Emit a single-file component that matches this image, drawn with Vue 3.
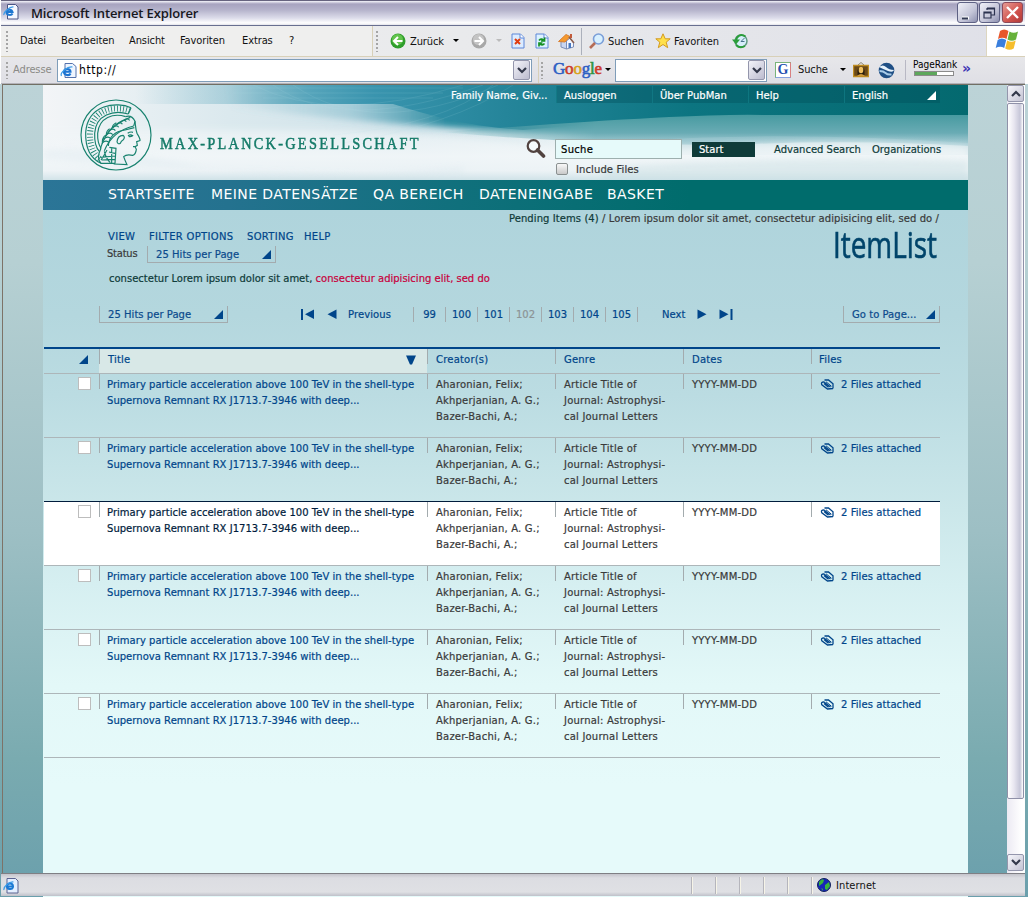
<script setup>
const menus = ['Datei', 'Bearbeiten', 'Ansicht', 'Favoriten', 'Extras', '?']
const nav = ['STARTSEITE', 'MEINE DATENSÄTZE', 'QA BEREICH', 'DATENEINGABE', 'BASKET']
const pages = [99, 100, 101, 102, 103, 104, 105]
const rows = [0, 1, 2, 3, 4, 5]
const current = 102
const selected = 2
</script>

<template>
  <div class="stage">
    <div class="titlebar">
      <svg class="ico" width="16" height="17" viewBox="0 0 16 17">
        <path d="M4.500 1.500h8l2.500 2.500v12h-10.500z" fill="#f6f8ff" stroke="#4c5584" />
        <path d="M9.500 10.500c-1 2-5.500 2-6-1c-.5-3 5-4 6-.5h-5.500" fill="none" stroke="#1f77d0" stroke-width="2" />
        <path d="M1 12c-1-3 6-8.500 9.500-8" fill="none" stroke="#3c9be8" stroke-width="1.200" />
      </svg>
      <span class="wtitle">Microsoft Internet Explorer</span>
      <span class="wbtn"><svg width="19" height="20"><path d="M4 15h7" stroke="#fff" stroke-width="3" /><path d="M4 15.500h6" stroke="#333a55" stroke-width="2" /></svg></span>
      <span class="wbtn"><svg width="18" height="20"><path d="M7 5h7.500v7h-3M7 5v2M7 6h7M4 9h7v6h-7zM4 10h7" fill="none" stroke="#2c3350" stroke-width="1.200" /></svg></span>
      <span class="wbtn close"><svg width="19" height="20"><path d="M4 4l11 11M15 4l-11 11" stroke="#fff" stroke-width="2.400" /></svg></span>
    </div>

    <div class="menubar">
      <div class="menus">
        <i class="grip"></i>
        <span v-for="m in menus" :key="m">{{ m }}</span>
      </div>
      <div class="tools">
        <i class="grip"></i>
        <svg width="16" height="16" viewBox="0 0 16 16"><circle cx="8" cy="8" r="7.500" fill="#2f9e2c" /><circle cx="7.500" cy="6.500" r="5.500" fill="#62c44d" /><path d="M12.500 8h-8M8 4l-4 4l4 4" fill="none" stroke="#fff" stroke-width="2" /></svg>
        <span>Zurück</span>
        <svg width="6" height="4"><path d="M0 0h6l-3 3z" fill="#000" /></svg>
        <svg width="16" height="16" viewBox="0 0 16 16"><circle cx="8" cy="8" r="7.500" fill="#a8a8a8" /><circle cx="7.500" cy="6.500" r="5.500" fill="#c4c4c4" /><path d="M3.500 8h8M8 4l4 4l-4 4" fill="none" stroke="#fff" stroke-width="2" /></svg>
        <svg width="6" height="4"><path d="M0 0h6l-3 3z" fill="#bbb" /></svg>
        <svg width="14" height="16"><path d="M1 1h8.500l3.500 3.500v10.500h-12z" fill="#dcecff" stroke="#5c86d8" /><path d="M9 1v4h4" fill="#fff" stroke="#5c86d8" /><path d="M4 6l5 5M9 6l-5 5" stroke="#e03c10" stroke-width="2" /></svg>
        <svg width="14" height="16"><path d="M1 1h8.500l3.500 3.500v10.500h-12z" fill="#dcf2ff" stroke="#5c86d8" /><path d="M9 1v4h4" fill="#fff" stroke="#5c86d8" /><path d="M4 7.500q2-2.500 4.500-.5M9.500 4.500V8H6M9.500 10.500q-2 2.500-4.500 .5M4 13.500V10H7.500" fill="none" stroke="#159124" stroke-width="1.700" /></svg>
        <svg width="17" height="17"><path d="M3 8.500v5.500l5.500 2v-8z" fill="#c8d6f2" stroke="#7d8fb8" /><path d="M8.500 16V8l3.500-3l3.500 5v4z" fill="#f4f7ff" stroke="#7d8fb8" /><path d="M0.500 8.500L8 1.500l4 2l-5 5.500z" fill="#f59a2e" stroke="#d98033" /><path d="M11 4l5 6" stroke="#8b5d4c" stroke-width="1.500" /><path d="M10.500 10h2.500v5h-2.500z" fill="#4877bf" /><path d="M12 1h2v4h-2z" fill="#c25a3a" /></svg>
        <i class="vsep"></i>
        <svg width="16" height="16"><circle cx="9.500" cy="6" r="5" fill="#d8f0ff" stroke="#7a9ed8" stroke-width="1.600" /><path d="M6 10l-5 5" stroke="#b56c57" stroke-width="2.600" /></svg>
        <span>Suchen</span>
        <svg width="16" height="16" viewBox="0 0 16 16"><path d="M8 .8l2.200 5h5l-4 3.400l1.500 5.500l-4.700-3.200l-4.700 3.200l1.500-5.500l-4-3.400h5z" fill="#ffe04a" stroke="#d39a20" /></svg>
        <span>Favoriten</span>
        <svg width="16" height="16"><circle cx="9" cy="8" r="6" fill="#d6eefa" stroke="#5f9a80" stroke-width="1.500" /><path d="M9 8.500l3.500-3.500M9 8.500h3.500" stroke="#48738b" /><path d="M13.500 3.500C9 .5 4.500 2.500 4 8M4 12q4 4 9 1" fill="none" stroke="#2b9d3a" stroke-width="2" /><path d="M0 6.500h8l-4 5z" fill="#2b9d3a" /></svg>
      </div>
      <div class="flag">
        <svg width="24" height="22" viewBox="0 0 24 22"><path d="M5 2q4-3 8.500 0l-2 8q-4-2.500-8.500 0z" fill="#e8562a" /><path d="M14.500 2.500q4 2.500 8.500 0l-2 8q-4 2.500-8.500 0z" fill="#67b13a" /><path d="M2.700 11q4-3 8.500 0l-2 8q-4-2.500-8.500 0z" fill="#3b7fdd" /><path d="M12.200 11.500q4 2.500 8.500 0l-2 8q-4 2.500-8.500 0z" fill="#f6bd2c" /></svg>
      </div>
    </div>

    <div class="addrbar">
      <i class="grip"></i>
      <span class="muted">Adresse</span>
      <div class="field">
        <svg width="17" height="17" viewBox="0 0 17 17"><path d="M5 1.500h7.500l3.500 3v11h-11z" fill="#eef5ff" stroke="#5572ac" /><path d="M10.500 11.500c-1 2.500-6.500 2-6.500-1.500c0-4 6.500-4 6.500-.2h-6" fill="none" stroke="#1c74d2" stroke-width="2.100" /><path d="M1.500 14c-2-3 6-10 11-9" fill="none" stroke="#3c9be8" stroke-width="1.200" /></svg>
        <span class="url">http://</span>
        <span class="drop"><svg width="10" height="7"><path d="M1 1l4 4l4-4" fill="none" stroke="#33384a" stroke-width="2.200" /></svg></span>
      </div>
      <i class="hsep"></i>
      <i class="grip"></i>
      <span class="google"><b class="b">G</b><b class="r">o</b><b class="y">o</b><b class="b">g</b><b class="g">l</b><b class="r">e</b></span>
      <svg width="6" height="4"><path d="M0 0h6l-3 3z" fill="#000" /></svg>
      <div class="field">
        <span class="drop"><svg width="10" height="7"><path d="M1 1l4 4l4-4" fill="none" stroke="#33384a" stroke-width="2.200" /></svg></span>
      </div>
      <span class="gbox">G</span>
      <span class="gs">Suche</span>
      <svg width="6" height="4"><path d="M0 0h6l-3 3z" fill="#000" /></svg>
      <svg width="16" height="16"><path d="M5 3l3-2.500l3 2.500" fill="none" stroke="#8c8570" /><path d="M.5 3.500h15v11h-15z" fill="#6b4a18" stroke="#c08d22" stroke-width="1.400" /><path d="M4.500 13V8q3.500-7 7 0v5z" fill="#2c1e0c" /><ellipse cx="8" cy="8" rx="2.300" ry="3.200" fill="#f0c060" /><path d="M4 14q4-4 8 0z" fill="#d09a3a" /></svg>
      <svg width="17" height="17"><circle cx="8.500" cy="8.500" r="7.800" fill="#1f4f85" /><path d="M1 5q4-3 7 0t8 3q-1 3-6 1T1 5z" fill="#e6f2fb" /><path d="M1.500 9q4 0 6 2t6 1.500" fill="none" stroke="#a8cbe8" stroke-width="2" /></svg>
      <i class="hsep tall"></i>
      <div class="rank"><span>PageRank</span><i></i></div>
      <span class="more">»</span>
    </div>

    <div class="viewport">
      <main class="page">
        <header class="head">
          <svg class="sky" width="925" height="95" viewBox="0 0 925 95">
            <defs>
              <linearGradient id="base" x1="0" y1="0" x2="1" y2="0"><stop offset="0" stop-color="#f3f5f7" /><stop offset=".2" stop-color="#dbe9ee" /><stop offset=".4" stop-color="#cfe2e9" /><stop offset=".55" stop-color="#e3eef1" /><stop offset="1" stop-color="#e2eff0" /></linearGradient>
              <linearGradient id="low" x1="0" y1="0" x2="0" y2="1"><stop offset="0" stop-color="#f3f7f9" stop-opacity="0" /><stop offset=".5" stop-color="#f3f7f9" stop-opacity=".9" /><stop offset=".8" stop-color="#edf3f6" stop-opacity=".9" /><stop offset="1" stop-color="#cadfe5" /></linearGradient>
              <linearGradient id="top" gradientUnits="userSpaceOnUse" x1="0" y1="0" x2="925" y2="0"><stop offset=".1" stop-color="#4fa0b7" stop-opacity="0" /><stop offset=".2" stop-color="#4fa0b7" stop-opacity=".35" /><stop offset=".29" stop-color="#4a9eb6" stop-opacity=".9" /><stop offset=".36" stop-color="#3994ae" /><stop offset=".5" stop-color="#25859a" /><stop offset=".7" stop-color="#0c7581" /><stop offset="1" stop-color="#04696f" /></linearGradient>
              <linearGradient id="mid" gradientUnits="userSpaceOnUse" x1="180" y1="0" x2="925" y2="0"><stop offset="0" stop-color="#5aa7bd" stop-opacity="0" /><stop offset=".17" stop-color="#55a3b9" stop-opacity=".35" /><stop offset=".3" stop-color="#2c8ba0" /><stop offset="1" stop-color="#0b737e" /></linearGradient>
              <linearGradient id="wave" x1="0" y1="0" x2="0" y2="1"><stop offset="0" stop-color="#479aa0" /><stop offset="1" stop-color="#82b8c3" /></linearGradient>
              <linearGradient id="fade" x1="0" y1="0" x2="1" y2="0"><stop offset="0" stop-color="#fff" stop-opacity="0" /><stop offset=".3" stop-color="#fff" /><stop offset="1" stop-color="#fff" /></linearGradient>
              <mask id="m"><rect x="390" y="0" width="540" height="95" fill="url(#fade)" /></mask>
              <filter id="soft" x="-5%" y="-20%" width="110%" height="140%"><feGaussianBlur stdDeviation="3" /></filter>
            </defs>
            <rect width="925" height="95" fill="url(#base)" />
            <path d="M180 -8H935V35L700 40Q520 52 400 42Q300 36 190 22Z" fill="url(#mid)" filter="url(#soft)" />
            <path d="M60 0H925V34Q700 24 480 45C430 42 390 32 350 19L90 19Z" fill="url(#top)" />
            <g mask="url(#m)">
              <path d="M400 47Q650 28 720 30L925 30V61Q800 54 690 60Q540 60 400 47Z" fill="url(#wave)" />
              <path d="M600 55Q760 46 925 58V70H600Z" fill="#92c1cb" opacity=".5" />
            </g>
            <path d="M0 45H280Q400 48 480 60Q620 69 700 60Q820 52 925 62V95H0Z" fill="#f1f6f8" opacity=".65" filter="url(#soft)" />
            <rect y="48" width="925" height="47" fill="url(#low)" opacity=".8" />
            <path d="M0 65Q60 60 150 80T420 82V90Q200 90 0 74Z" fill="#d7e5ec" opacity=".3" filter="url(#soft)" />
            <path d="M560 83Q720 70 925 76V95H560Z" fill="#bfd9dd" opacity=".35" filter="url(#soft)" />
            <g fill="none" stroke="#b5e0e8" stroke-width=".6" opacity=".2">
              <path d="M210 0Q290 40 420 0" /><path d="M230 0Q300 50 440 0" /><path d="M250 0Q330 55 455 0" /><path d="M290 50Q400 40 450 0" /><path d="M300 58Q410 40 470 0" /><path d="M200 3H420M190 8H400M220 13H390" />
            </g>
          </svg>
          <div class="brand">
            <svg width="74" height="74" viewBox="236 54 222 222">
              <g fill="none" stroke="#18826f" stroke-width="3.500">
                <circle cx="347" cy="165" r="105" />
                <path d="M392 83C350 64 262 72 256 158C255 205 272 236 302 250M384 102C340 88 286 104 283 160C282 190 287 204 297 214M376 110C340 98 296 112 292 160C291 184 296 196 302 205" />
                <path d="M388 92C345 76 274 86 269 160C268 200 282 225 298 236" stroke-width="18" stroke-dasharray="2.500 6.500" />
                <path d="M392 83L384 102M302 205C292 225 292 240 302 250L345 250M376 110Q394 104 404 124Q402 132 400 138" />
                <path d="M300 206C318 150 345 128 390 112M312 212C326 178 350 150 400 138" />
                <path d="M304 190q14-12 22-2M309 178q14-12 22-2M316 166q14-12 21-2M325 154q14-12 20-2M336 144q14-12 19-2M348 135q14-12 18-2M360 127q12-10 18-2M372 121q10-8 16 0M306 186q0-14 10-20M318 164q0-12 10-18M336 144q0-10 12-16" />
                <path d="M324 198C326 170 345 154 374 150L402 143M350 186q2-20 18-20q8 6 0 14q-6 3-8 10q-6 4-10-4" />
                <path d="M404 124C406 140 406 150 410 160Q420 176 419 182L409 185L411 196L404 200L408 208Q406 224 397 226Q378 222 370 230Q374 242 380 254L340 252M382 160q8-6 16-3M383 167q8-5 14 0q-6 4-12 2M398 200l8-1" />
                <path d="M327 202L347 205L344 250M334 204v46M320 210q-12 22-18 30M312 214q4 20 18 34M300 232l44-4M304 240l40-2M326 216l18 4" />
              </g>
            </svg>
            <span>MAX-PLANCK-GESELLSCHAFT</span>
          </div>
          <div class="service">
            <div class="topmenu">
              <span class="user">Family Name, Giv...</span>
              <span class="cell">Ausloggen</span><span class="cell">Über PubMan</span><span class="cell">Help</span>
              <span class="cell lang">English<svg width="9" height="9"><path d="M9 0v9h-9z" fill="#fff" /></svg></span>
            </div>
            <div class="search">
              <svg width="21" height="21"><circle cx="8.500" cy="7" r="5.800" fill="#f5fafb" stroke="#51423f" stroke-width="2.200" /><path d="M12.500 11l6 6" stroke="#51423f" stroke-width="3.600" stroke-linecap="round" /></svg>
              <span class="query">Suche</span>
              <span class="start">Start</span>
              <span class="link">Advanced Search</span>
              <span class="link">Organizations</span>
            </div>
            <div class="include"><i></i><span>Include Files</span></div>
          </div>
        </header>
        <nav class="nav"><span v-for="n in nav" :key="n">{{ n }}</span></nav>

        <section class="info">
          <div class="left">
            <div class="views"><span>VIEW</span><span>FILTER OPTIONS</span><span>SORTING</span><span>HELP</span></div>
            <div class="status"><span class="lbl">Status</span><span class="select">25 Hits per Page<svg width="9" height="9"><path d="M9 0v9h-9z" fill="#00458a" /></svg></span></div>
            <p class="hint">consectetur Lorem ipsum dolor sit amet, <em>consectetur adipisicing elit, sed do</em></p>
          </div>
          <div class="right">
            <p class="crumb"><b>Pending Items (4)</b> / Lorem ipsum dolor sit amet, consectetur adipisicing elit, sed do /</p>
            <h1>ItemList</h1>
          </div>
        </section>

        <div class="pager">
          <span class="select">25 Hits per Page<svg width="9" height="9"><path d="M9 0v9h-9z" fill="#00458a" /></svg></span>
          <svg class="first" width="14" height="11"><path d="M1 0v11" stroke="#00458a" stroke-width="2" /><path d="M13 .5v9.500l-9-4.750z" fill="#00458a" /></svg>
          <svg class="prev" width="10" height="11"><path d="M9.500 .5v9.500l-9-4.750z" fill="#00458a" /></svg>
          <span class="step">Previous</span>
          <ol><li v-for="p in pages" :key="p" :class="{ off: p === current }">{{ p }}</li></ol>
          <span class="next">Next</span>
          <svg class="fwd" width="10" height="11"><path d="M.5 .5v9.500l9-4.750z" fill="#00458a" /></svg>
          <svg width="14" height="11"><path d="M12.500 0v11" stroke="#00458a" stroke-width="2" /><path d="M.5 .5v9.500l9-4.750z" fill="#00458a" /></svg>
          <span class="select goto">Go to Page...<svg width="9" height="9"><path d="M9 0v9h-9z" fill="#00458a" /></svg></span>
        </div>

        <div class="table">
          <div class="row thead">
            <div class="pick"><svg width="9" height="9"><path d="M9 0v9h-9z" fill="#00458a" /></svg></div>
            <div class="col sorted">Title<svg width="10" height="10"><path d="M0 .5h10l-4 9h-2z" fill="#00458a" /></svg></div>
            <div class="col">Creator(s)</div><div class="col">Genre</div><div class="col">Dates</div><div class="col last">Files</div>
          </div>
          <div v-for="r in rows" :key="r" class="row item" :class="{ active: r === selected }">
            <div class="pick"><i></i></div>
            <div class="col title">Primary particle acceleration above 100 TeV in the shell-type<br>Supernova Remnant RX J1713.7-3946 with deep...</div>
            <div class="col">Aharonian, Felix;<br>Akhperjanian, A. G.;<br>Bazer-Bachi, A.;</div>
            <div class="col">Article Title of<br>Journal: Astrophysi-<br>cal Journal Letters</div>
            <div class="col date">YYYY-MM-DD</div>
            <div class="col files">
              <svg width="15" height="11" viewBox="0 0 15 11"><path d="M13 9.500L7.500 10L1.800 5.800Q.6 2.800 3.800 2.800L10.500 8M4.500 1H8.500L13 4.800V9.500M4 4.500L8.500 8.300" fill="none" stroke="#00458a" stroke-width="1.300" /><path d="M6 2.800L11.500 7.300" stroke="#00458a" stroke-width="1" /></svg>
              <span>2 Files attached</span>
            </div>
          </div>
        </div>
      </main>
      <div class="scroll">
        <span class="sbtn"><svg width="10" height="7"><path d="M1 6l4-4l4 4" fill="none" stroke="#33384a" stroke-width="2.200" /></svg></span>
        <span class="thumb"></span>
        <span class="sbtn down"><svg width="10" height="7"><path d="M1 1l4 4l4-4" fill="none" stroke="#33384a" stroke-width="2.200" /></svg></span>
      </div>
    </div>

    <div class="statusbar">
      <svg class="ico" width="16" height="17" viewBox="0 0 16 17"><path d="M4 1.500h8.500l2.500 2.500v12h-11z" fill="#e4efff" stroke="#5b6391" /><path d="M10 10.500c-1 2.500-6 2-6-1c0-4 6-4 6 0h-6" fill="none" stroke="#1c7ad4" stroke-width="2" /><path d="M1 13c-1-3 5-8.500 9.500-8" fill="none" stroke="#3c9be8" stroke-width="1.200" /></svg>
      <span class="panes"><i v-for="n in 5" :key="n"></i></span>
      <span class="zone">
        <svg width="14" height="14"><circle cx="7" cy="7" r="6.500" fill="#1626b8" stroke="#10205a" /><path d="M2 4q3-4 5-2l-1 3l-4 3zM8 7l4-3l1 4l-3 4l-2-1zM4 10l2 1v2z" fill="#38b63c" /></svg>
        <span>Internet</span>
      </span>
    </div>
    <div class="foot"></div>
  </div>
</template>

<style>
body { background: #fff; overflow: hidden; }
</style>

<style scoped>
* { box-sizing: border-box; }
p, h1, ol { margin: 0; padding: 0; list-style: none; }
svg { display: block; flex: none; }
span { white-space: nowrap; }
.stage { width: 1028px; height: 897px; display: flex; flex-direction: column; font: 10px/16px "DejaVu Sans", sans-serif; color: #393a3a;
  background: linear-gradient(#bcd3d7, #b6d0d3 22%, #9dbfc4 55%, #7aabb0 83%, #6a9fac) 0 84px / 100% 813px no-repeat, #fff; }
.titlebar, .menubar, .addrbar, .statusbar { margin: 0 3px 0 1px; font: 11px/14px "DejaVu Sans Condensed", "DejaVu Sans", sans-serif; font-stretch: condensed; letter-spacing: -.1px; color: #111; flex: none; }

.titlebar { height: 26px; display: grid; grid-template-columns: 28px 926px 22px 23px 22px; padding: 2px 0 0 2px; border-top: 1px solid #66637e; border-bottom: 1px solid #686f90; background: linear-gradient(#f4f4fa 0, #a7a3bf 3px, #b5b3cb 9px, #dcdcea 17px, #fff 22px, #d5d5df 25px); }
.wtitle { font: 600 13px/20px "Open Sans", sans-serif; color: #17171d; letter-spacing: -.12px; }
.wbtn { width: 21px; height: 21px; margin-top: -1px; border: 1px solid #5e6184; border-radius: 3px; background: linear-gradient(135deg, #f0f0f8, #c4c5d8 60%, #8d90b0); }
.close { background: linear-gradient(135deg, #e79b95, #d0524c 60%, #b03a3a); border-color: #8c4a5a; }

.menubar { height: 31px; display: grid; grid-template-columns: 372px 613px 1fr; background: linear-gradient(90deg, #efeff0, #e9eaec 45%, #dfe0e8); border-bottom: 1px solid #d8d0b8; }
.grip { width: 2px; height: 21px; background: repeating-linear-gradient(#a5a5a5 0 2px, transparent 2px 4px); }
.menus { display: grid; grid-template-columns: 14px 41px 68px 51px 62px 47px 30px; align-items: center; padding-left: 5px; border-right: 1px solid #d8d0b8; background: #efefee; }
.tools { display: grid; grid-template-columns: 14px 20px 43px 18px 25px 15px 24px 23px 23px 8px 19px 47px 19px 58px 20px; align-items: center; padding-left: 3px; }
.tools span { padding-top: 1px; }
.vsep { width: 1px; height: 27px; background: #abb0bb; }
.flag { background: #fff; border-left: 1px solid #ddd6c0; padding: 3px 0 0 8px; }

.addrbar { height: 27px; padding-left: 5px; display: grid; grid-template-columns: 7px 44px 481px 3px 12px 52px 10px 160px 23px 42px 13px 25px 27px 8px 49px 20px; align-items: center; background: linear-gradient(#e7e7ea, #dfdfe5); border-bottom: 1px solid #b3b2b8; }
.addrbar .grip { height: 17px; }
.muted { color: #8a8a86; }
.field { width: 475px; height: 23px; display: flex; align-items: center; padding: 0 1px 0 2px; background: #fff; border: 1px solid #7f9db9; }
.field:nth-of-type(2) { width: 152px; }
.url { margin-left: 2px; font-size: 12px; letter-spacing: .6px; color: #000; }
.drop { margin-left: auto; width: 17px; height: 20px; border: 1px solid #9496ac; border-radius: 2px; background: linear-gradient(135deg, #f3f3f9, #bcbccf); display: grid; place-items: center; }
.hsep { width: 1px; height: 26px; background: #d8d0b8; }
.hsep.tall { height: 20px; background: #b8b8c4; }
.google { font: 17px/18px "Liberation Serif", serif; letter-spacing: -.2px; margin-top: -3px; }
.google b { font-weight: normal; -webkit-text-stroke: .6px currentColor; }
.b { color: #2e5fc4; } .r { color: #cc3b2c; } .y { color: #d8a21c; } .g { color: #2d9440; }
.gbox { width: 16px; height: 16px; border: 1px solid #7ab37a; border-right-color: #d98080; border-bottom-color: #86a2e0; background: #fff; color: #2350b0; font: bold 14px/14px "Liberation Serif", serif; text-align: center; }
.rank { align-self: start; padding-top: 2px; font-size: 10px; line-height: 11px; letter-spacing: 0; color: #000; }
.rank i { display: block; width: 40px; height: 5px; margin: 1px 0 0 1px; border: 1px solid #8b8b8b; background: linear-gradient(90deg, #5da75c 22px, #fff 22px); }
.more { font: bold 14px/14px "DejaVu Sans", sans-serif; color: #3e35b4; margin-top: -4px; }

.viewport { height: 789px; margin: 0 3px 0 2px; display: flex; border-top: 1px solid #716f64; border-left: 1px solid #7d7368; }
.page { width: 925px; margin-left: 40px; background: linear-gradient(#afd4dc 125px, #b4d7de 230px, #bbdce2 310px, #cbe7ea 425px, #d6eff1 500px, #e3f8f8 600px, #e6fafa 700px); -webkit-text-stroke: .2px currentColor; }
.head { position: relative; height: 95px; display: grid; grid-template-columns: 407px 1fr; }
.sky { position: absolute; inset: 0; }
.brand { position: relative; padding: 13px 0 0 36px; display: flex; color: #147a68; }
.brand span { margin: 35px 0 0 7px; font: 17.5px/20px "Liberation Serif", serif; letter-spacing: 2.75px; -webkit-text-stroke: .5px #147a68; transform: scaleX(.82); transform-origin: left; }
.service { position: relative; color: #0f3b39; }
.topmenu { display: flex; padding-top: 1px; color: #fff; line-height: 19px; }
.user { width: 106px; padding-left: 1px; }
.cell { width: 96px; height: 17px; padding-left: 7px; border-left: 1px solid rgba(20,130,140,.6); background: rgba(0,75,85,.35); }
.lang { display: flex; }
.lang svg { margin: 5px 4px 0 auto; }
.search { display: grid; grid-template-columns: 30px 137px 82px 98px 70px; padding: 34px 0 0 75px; height: 75px; }
.query { width: 127px; height: 20px; padding-left: 5px; border: 1px solid #9dafae; background: #e6fafa; color: #000; line-height: 20px; letter-spacing: .3px; }
.start { width: 63px; height: 15px; margin-top: 3px; padding-left: 7px; background: #0f3b39; color: #fff; line-height: 15px; }
.link { margin-top: 3px; line-height: 15px; }
.include { display: flex; margin: -17px 0 0 106px; color: #393a3a; line-height: 14px; letter-spacing: .1px; }
.include i { width: 12px; height: 12px; margin-right: 8px; border: 1px solid #8a9090; border-radius: 2px; background: linear-gradient(#f8f8f8, #c9c9c9); }
.nav { height: 30px; display: grid; grid-template-columns: 103px 162px 106px 128px 80px; padding-left: 65px; font-size: 14px; line-height: 28px; letter-spacing: .42px; -webkit-text-stroke: 0; color: #fff; background: linear-gradient(90deg, #2b7597, #24728f 20%, #10707c 45%, #006c6c 70%); }

.info { height: 96px; display: flex; justify-content: space-between; }
.left { padding: 19px 0 0 65px; color: #00458a; }
.views { display: grid; grid-template-columns: 41px 98px 57px 30px; letter-spacing: .3px; }
.status { display: flex; height: 17px; margin-top: 1px; }
.lbl { width: 39px; margin-left: -1px; color: #393a3a; font-size: 11px; font-family: "DejaVu Sans Condensed", "DejaVu Sans", sans-serif; font-stretch: condensed; letter-spacing: -.2px; }
.select { width: 129px; height: 17px; padding-left: 8px; display: flex; border: 1px solid #a3abae; border-top: 0; color: #0b4a8c; line-height: 18px; letter-spacing: .04px; }
.select svg { margin: 4px 4px 0 auto; }
.status .select { margin-left: 1px; }
.hint { margin: 8px 0 0 1px; color: #0f3b39; }
.hint em { color: #c8003c; font-style: normal; }
.right { text-align: right; padding-right: 29px; }
.crumb { white-space: nowrap; line-height: 17px; letter-spacing: .08px; }
.crumb b { font-weight: normal; color: #0f3b39; }
h1 { margin: 1px 2px 0 0; font: 36px/34px "Open Sans", sans-serif; color: #00446a; transform: scaleX(.775); transform-origin: right; -webkit-text-stroke: .6px currentColor; }

.pager { height: 41px; margin-left: 56px; display: flex; align-items: flex-start; color: #00458a; line-height: 18px; }
.pager > svg { margin-top: 3px; }
.pager > .first { margin-left: 73px; }
.pager > .prev { margin-left: 12px; }
.step { width: 65px; margin-left: 11px; letter-spacing: .1px; }
.pager ol { display: flex; border-right: 1px solid #a3abae; height: 15px; margin-top: 1px; }
.pager li { width: 32px; border-left: 1px solid #a3abae; text-align: center; line-height: 16px; }
.off { color: #8c9496; }
.next { width: 35px; margin-left: 24px; }
.pager > .fwd { margin-right: 12px; }
.goto { width: 97px; margin-left: 110px; }

.table { width: 896px; margin-left: 1px; border-top: 2px solid #00458a; }
.row { display: grid; grid-template-columns: 55px 328px 128px 128px 128px 129px; border-bottom: 1px solid #adb6b9; }
.thead { height: 25px; color: #00458a; line-height: 21px; }
.item { height: 64px; }
.pick { display: flex; justify-content: flex-end; padding: 3px 8px 0 0; }
.pick i { width: 13px; height: 13px; background: #fff; border: 1px solid #bdbdbd; }
.thead .pick { padding: 6px 11px 0 0; }
.col { padding: 3px 0 0 9px; letter-spacing: .2px; background: linear-gradient(#a3abae, #a3abae) 0 0 / 1px 15px no-repeat; }
.thead .col { padding-top: 0; }
.thead .last { padding-left: 8px; }
.sorted { display: flex; justify-content: space-between; background: linear-gradient(#a3abae, #a3abae) 0 0 / 1px 15px no-repeat, #d8e8e7 !important; }
.sorted svg { margin: 6px 11px 0 0; }
.title { padding-left: 8px; color: #00458a; letter-spacing: .03px; }
.files { display: flex; color: #00458a; letter-spacing: .07px; }
.files svg { margin: 2px 6px 0 0; }
.active { background: #fff; border-top: 1px solid #001c3c; margin-top: -1px; height: 65px; }
.active .title { color: #001c3c; }

.scroll { margin-left: auto; width: 18px; padding-right: 1px; display: flex; flex-direction: column; background: linear-gradient(90deg, #eceaf3, #fff 80%); }
.sbtn { height: 17px; display: grid; place-items: center; border: 1px solid #9496ac; border-radius: 2px; background: linear-gradient(135deg, #f5f5fa, #c4c4d4); }
.thumb { height: 697px; margin-top: 1px; border: 1px solid #8f91a8; border-radius: 2px; background: linear-gradient(90deg, #fff, #e8e6f0 40%, #c6c6d8 80%, #fff); }
.down { margin: 55px 0 2px; }

.statusbar { height: 23px; display: flex; align-items: center; padding-left: 2px; border-top: 1px solid #7f7f84; background: linear-gradient(#c4c4cb, #dcdde2 4px, #dfe0e4 18px, #bfc1ca); }
.panes { display: flex; margin-left: 672px; }
.panes i { width: 24px; height: 17px; border-left: 1px solid #b5b5bc; box-shadow: inset 1px 0 #f6f4e8; }
.zone { display: flex; align-items: center; gap: 5px; padding-left: 5px; height: 17px; border-left: 1px solid #b5b5bc; box-shadow: inset 1px 0 #f6f4e8; letter-spacing: .1px; }
.zone span { padding-top: 2px; }
.foot { height: 1px; margin: 0 60px 0 43px; background: #e6fafa; }
</style>
